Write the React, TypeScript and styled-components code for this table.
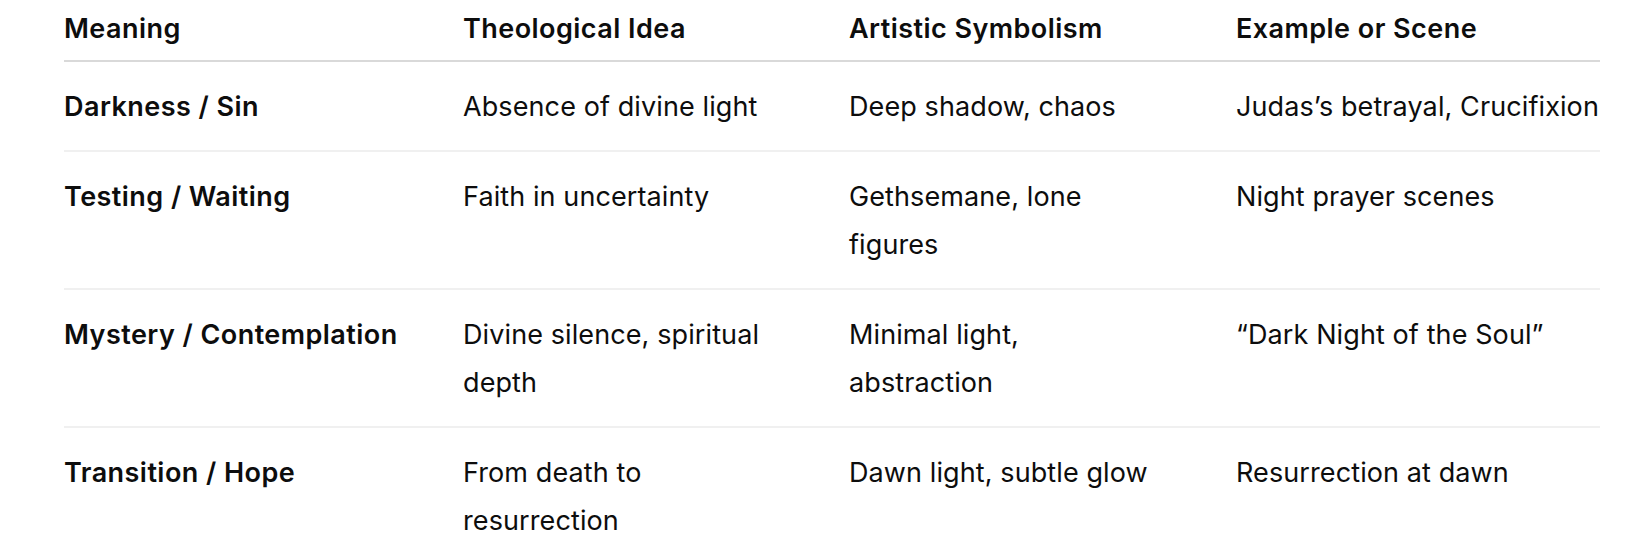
import React from 'react'
import styled, { createGlobalStyle } from 'styled-components'

const GlobalStyle = createGlobalStyle`
	html, body {
		margin: 0;
		padding: 0;
		background: #ffffff;
	}

	body {
		font-family: Inter, 'Noto Sans', 'Liberation Sans', sans-serif;
		color: #0d0d0d;
		-webkit-font-smoothing: antialiased;
	}
`

interface Row {
	meaning: string
	idea: string
	symbolism: string
	example: string
}

const rows: Row[] = [
	{
		meaning: 'Darkness / Sin',
		idea: 'Absence of divine light',
		symbolism: 'Deep shadow, chaos',
		example: 'Judas’s betrayal, Crucifixion',
	},
	{
		meaning: 'Testing / Waiting',
		idea: 'Faith in uncertainty',
		symbolism: 'Gethsemane, lone figures',
		example: 'Night prayer scenes',
	},
	{
		meaning: 'Mystery / Contemplation',
		idea: 'Divine silence, spiritual depth',
		symbolism: 'Minimal light, abstraction',
		example: '“Dark Night of the Soul”',
	},
	{
		meaning: 'Transition / Hope',
		idea: 'From death to resurrection',
		symbolism: 'Dawn light, subtle glow',
		example: 'Resurrection at dawn',
	},
]

const headers = ['Meaning', 'Theological Idea', 'Artistic Symbolism', 'Example or Scene']
const columnWidths = [399, 386, 387, 364]

const Page = styled.div`
	padding: 0 42px 0 64px;
`

const Table = styled.table`
	width: 1536px;
	border-collapse: collapse;
	table-layout: fixed;
	font-size: 27px;
	line-height: 48px;
`

const HeadCell = styled.th<{ $last?: boolean }>`
	text-align: left;
	font-weight: 600;
	letter-spacing: 0.45px;
	padding: 5px ${props => (props.$last ? '0' : '76px')} 7px 0;
	border-bottom: 2px solid #d9d9d9;
	vertical-align: top;
	white-space: nowrap;
`

const BodyRow = styled.tr<{ $last?: boolean }>`
	border-bottom: ${props => (props.$last ? 'none' : '2px solid #f0f0f0')};
`

const Cell = styled.td<{ $strong?: boolean; $last?: boolean }>`
	padding: 21px ${props => (props.$last ? '0' : '76px')} 19px 0;
	font-weight: ${props => (props.$strong ? 600 : 400)};
	letter-spacing: ${props => (props.$strong ? '0.45px' : '0.1px')};
	vertical-align: top;
	white-space: ${props => (props.$strong || props.$last ? 'nowrap' : 'normal')};
`

const App: React.FC = () => {
	return (
		<Page>
			<GlobalStyle />
			<Table>
				<colgroup>
					{columnWidths.map((w, i) => (
						<col key={i} style={{ width: w }} />
					))}
				</colgroup>
				<thead>
					<tr>
						{headers.map((h, i) => (
							<HeadCell key={h} $last={i === headers.length - 1}>
								{h}
							</HeadCell>
						))}
					</tr>
				</thead>
				<tbody>
					{rows.map((row, i) => (
						<BodyRow key={row.meaning} $last={i === rows.length - 1}>
							<Cell $strong>{row.meaning}</Cell>
							<Cell>{row.idea}</Cell>
							<Cell>{row.symbolism}</Cell>
							<Cell $last>{row.example}</Cell>
						</BodyRow>
					))}
				</tbody>
			</Table>
		</Page>
	)
}

export default App
